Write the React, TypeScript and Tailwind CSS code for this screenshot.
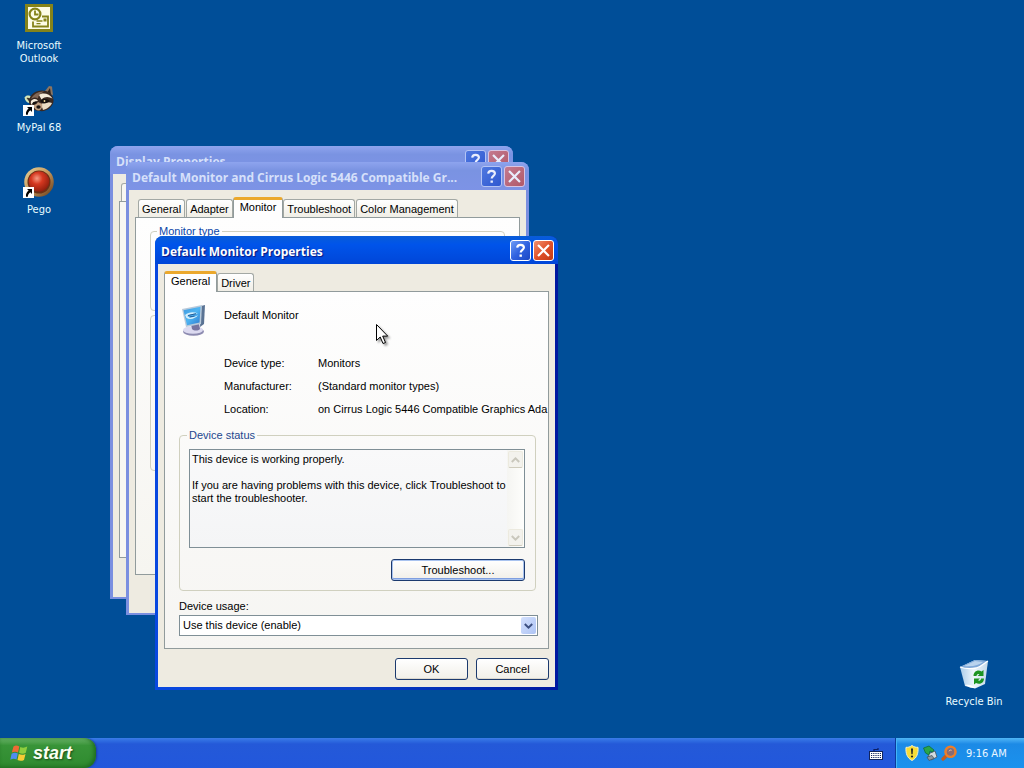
import type { ReactNode } from "react";

const MONITOR_TABS = ["General", "Adapter", "Monitor", "Troubleshoot", "Color Management"];
const DEVICE_TABS = ["General", "Driver"];
const DETAILS: [string, string][] = [
  ["Device type:", "Monitors"],
  ["Manufacturer:", "(Standard monitor types)"],
  ["Location:", "on Cirrus Logic 5446 Compatible Graphics Ada"],
];

function TitleButton({ kind, active }: { kind: "help" | "close"; active: boolean }) {
  const tone =
    kind === "help"
      ? active
        ? "border-white bg-linear-to-br from-[#6f9cf5] via-[#2f62e0] to-[#1c47c4]"
        : "border-[#b4c4f5] bg-linear-to-br from-[#4f78e0] to-[#2f57d0]"
      : active
        ? "border-white bg-linear-to-br from-[#f0906c] via-[#e0512a] to-[#c53a14]"
        : "border-[#d8c4e2] bg-linear-to-br from-[#c47a90] to-[#b05868]";
  return (
    <button
      aria-label={kind === "help" ? "Help" : "Close"}
      className={`flex h-[21px] w-[21px] items-center justify-center rounded-[3px] border ${tone}`}
    >
      <svg viewBox="0 0 19 19" className="h-[19px] w-[19px]" fill="none" stroke={active ? "#fff" : "#e9edfc"}>
        {kind === "help" ? (
          <>
            <path d="M6.2 6.6C6.3 4.8 7.6 3.8 9.5 3.8c2 0 3.4 1.1 3.4 2.8 0 2.3-3.2 2.4-3.2 5" strokeWidth="2.2" />
            <path d="M9.7 13.4v2.4" strokeWidth="2.4" />
          </>
        ) : (
          <path d="M4.8 4.8l9.4 9.4M14.2 4.8l-9.4 9.4" strokeWidth="2.2" strokeLinecap="square" />
        )}
      </svg>
    </button>
  );
}

function Window({
  title,
  active = false,
  place,
  children,
}: {
  title: string;
  active?: boolean;
  place: string;
  children: ReactNode;
}) {
  return (
    <section
      aria-label={title}
      className={`absolute flex min-h-[453px] w-[403px] flex-col overflow-hidden rounded-t-lg ${place} ${
        active ? "bg-linear-to-r from-[#0848e0] via-[#0a3ec8] to-[#0018a0]" : "bg-[#7b8fe0]"
      }`}
    >
      <header
        className={`flex h-7 items-center gap-0.5 pt-px pr-1 pl-1.5 ${
          active
            ? "bg-linear-to-b from-[#0a5cd8] via-[#0054ea] via-30% to-[#0046d8]"
            : "bg-linear-to-b from-[#8ea4ee] via-[#7a93e2] via-30% to-[#7d93e6]"
        }`}
      >
        <h2
          className={`min-w-0 flex-1 truncate pt-0.5 pr-2 font-['Open_Sans','Noto_Sans',sans-serif] text-[12px] leading-4 font-bold ${
            active ? "text-white [text-shadow:1px_1px_1px_#0a1883]" : "text-[#d6e0fa]"
          }`}
        >
          {title}
        </h2>
        <TitleButton kind="help" active={active} />
        <TitleButton kind="close" active={active} />
      </header>
      <div
        className={`mx-[3px] flex flex-1 flex-col px-1.5 pt-[7px] pb-[7px] ${
          active ? "mb-[3px]" : "mb-0.5"
        } bg-[#eeebe1]`}
      >
        {children}
      </div>
    </section>
  );
}

function Tabs({ names, selected }: { names: string[]; selected: string }) {
  const current = names.indexOf(selected);
  return (
    <div role="tablist" className="flex h-5 items-end">
      {names.map((name, index) =>
        index === current ? (
          <button
            key={name}
            role="tab"
            aria-selected="true"
            className="relative -mb-px h-[21px] rounded-t-[3px] border-x border-t-[3px] border-x-[#919b9c] border-t-[#eba82c] bg-[#fefefe] px-1.5 pb-1 leading-[13px]"
          >
            {name}
          </button>
        ) : (
          <button
            key={name}
            role="tab"
            aria-selected="false"
            className={`h-[18px] rounded-t-[3px] border border-b-0 border-[#a3a8a4] bg-linear-to-b from-white to-[#f0eee6] px-[3px] pt-px leading-[13px] ${
              index === current + 1 ? "" : index === 0 ? "ml-[3px]" : "ml-px"
            }`}
          >
            {name}
          </button>
        ),
      )}
    </div>
  );
}

function Chevron({ up = false, color }: { up?: boolean; color: string }) {
  return (
    <svg viewBox="0 0 9 6" className="h-1.5 w-[9px]" fill="none" stroke={color} strokeWidth="2">
      <path d={up ? "M0.8 5L4.5 1.4 8.2 5" : "M0.8 1L4.5 4.6 8.2 1"} />
    </svg>
  );
}

function PushButton({ children, focused = false, width }: { children: ReactNode; focused?: boolean; width: string }) {
  return (
    <button
      className={`h-[22px] ${width} rounded-[3px] border border-[#1c3a6e] bg-linear-to-b from-white to-[#f1efe8] leading-[13px] ${
        focused ? "shadow-[inset_0_0_0_1px_#a9c3ef,inset_0_-2px_0_0_#7f9fe0]" : "shadow-[inset_0_-1px_0_0_#dcd8ce]"
      }`}
    >
      {children}
    </button>
  );
}

function ShortcutArrow() {
  return (
    <g>
      <rect x="0" y="21" width="11" height="11" fill="#fff" />
      <path d="M4 23h5v5l-1.7-1.7C5.600 27.600 5 28.700 4.800 30.800H3c-.3-2.700.6-4.700 2.600-6.200z" fill="#000" />
    </g>
  );
}

function OutlookIcon() {
  return (
    <svg viewBox="0 0 32 32" className="size-8">
      <rect x="2" y="2" width="28" height="28" fill="#85831a" />
      <rect x="5" y="5" width="22" height="22" fill="#fdfce6" />
      <g fill="none" stroke="#85831a">
        <circle cx="12" cy="12" r="5.4" strokeWidth="2.2" />
        <path d="M12 8.500v4h3.500" strokeWidth="1.800" />
        <path d="M19 14.500h6v10H10v-5" strokeWidth="1.800" />
        <path d="M13.500 19h6M13.500 21.700h4" strokeWidth="1.300" />
      </g>
      <rect x="20.500" y="16.500" width="3" height="3" fill="#85831a" />
    </svg>
  );
}

function RaccoonIcon() {
  return (
    <svg viewBox="0 0 32 32" className="size-8">
      <path d="M22 7l4-5 3 .5 1 9z" fill="#8c7460" />
      <path d="M24.500 8l2.500-4 1 7z" fill="#2d211b" />
      <path d="M1.500 13.500C3 10.500 7 11 9 13l-2 6c-3 0-5-2-5.500-5.500z" fill="#d5e5b8" />
      <path d="M3.500 14c2-.8 3.500 0 4.500 2l-1.500 2z" fill="#41372c" />
      <path d="M6 17c1-8 9-12 17-10 5 1.500 8 6 7.500 10.500C30 23 23 28 17 27 10 27 6 23 6 17z" fill="#3a2922" />
      <path d="M8 15c2-5 8-8 13-7.500-4 2-6 4-6 7-3-2-5-1-7 .5z" fill="#806656" />
      <path d="M16 11c4-3 11-1 13.500 3.500-3-1.500-7-3-11 1z" fill="#f5ead9" />
      <path d="M8 17c3-3 6-2 7 0-3 0-5 2-6 4-1-1-1.500-2-1-4z" fill="#f5ead9" />
      <path d="M18 20c4-2 8-2 11-1-1 3-5 6-9 7z" fill="#eadcc5" />
      <path d="M10 21c2 0 4-1 5-3l4 2c1 3-1 6-3 6.500-3 0-5-2-6-5.500z" fill="#c2a183" />
      <path d="M17 17c3-3 8-2 10 0-2 2-6 3-8 2zM9 20c1-3 4-3 5-2-1 2-3 3-5 2z" fill="#15100e" />
      <ellipse cx="15.500" cy="23" rx="2.200" ry="1.700" fill="#1b1412" />
      <circle cx="21.500" cy="17" r=".9" fill="#f3dca0" />
      <ShortcutArrow />
    </svg>
  );
}

function PegoIcon() {
  return (
    <svg viewBox="0 0 32 32" className="size-8">
      <defs>
        <radialGradient id="pego-ball" cx=".4" cy=".35" r=".7">
          <stop offset="0" stopColor="#f59a82" />
          <stop offset=".4" stopColor="#d63820" />
          <stop offset="1" stopColor="#8a1c0c" />
        </radialGradient>
        <linearGradient id="pego-rim" x1="0" y1="0" x2="1" y2="1">
          <stop offset="0" stopColor="#e8d49a" />
          <stop offset=".5" stopColor="#c4965a" />
          <stop offset="1" stopColor="#5d3415" />
        </linearGradient>
      </defs>
      <circle cx="16" cy="16" r="14.800" fill="url(#pego-rim)" />
      <circle cx="16" cy="16" r="11.500" fill="#6b2f16" />
      <circle cx="16" cy="15.500" r="10.300" fill="url(#pego-ball)" />
      <ShortcutArrow />
    </svg>
  );
}

function RecycleIcon() {
  return (
    <svg viewBox="0 0 32 32" className="size-8">
      <defs>
        <linearGradient id="bin-body" x1="0" y1="0" x2="1" y2="0">
          <stop offset="0" stopColor="#a9cbe9" />
          <stop offset=".5" stopColor="#eef6fc" />
          <stop offset="1" stopColor="#c4d9ea" />
        </linearGradient>
      </defs>
      <path d="M2 9L17 2l13 1-3 23-10 4.500L7 28z" fill="url(#bin-body)" />
      <path d="M2 9L17 2l13 1c-4 2-5 5-12 7-6 1-10 1-16-1z" fill="#7fa8d8" />
      <path d="M6 8l11-5 8 1c-4 3-10 5-19 4z" fill="#b9d3ee" />
      <path d="M2 9c6 2 10 2 16 1 7-2 8-5 12-7" fill="none" stroke="#fff" strokeWidth="1.300" />
      <path d="M7 27c4-1 7 0 10 3l-5-.5z" fill="#fff" />
      <g fill="#1c9422">
        <path d="M15.500 18c0-4.500 4.500-7 8-4.500l2-1.500v6h-6l2-1.800c-1.600-.8-2.800 0-3 1.800z" />
        <path d="M26 20.500c0 4.500-4.500 6.500-8 4.500l-2 1.500v-6h6l-2 1.800c1.600.9 2.800.2 3-1.800z" />
      </g>
    </svg>
  );
}

function MonitorIcon() {
  return (
    <svg viewBox="0 0 32 32" className="size-8 shrink-0">
      <defs>
        <linearGradient id="screen" x1="0" y1="0" x2="1" y2="1">
          <stop offset="0" stopColor="#3f9ae0" />
          <stop offset=".5" stopColor="#4fb5f2" />
          <stop offset="1" stopColor="#2d7ad0" />
        </linearGradient>
      </defs>
      <ellipse cx="14.500" cy="27.500" rx="10.500" ry="4.300" fill="#8d8bb0" />
      <ellipse cx="14" cy="26" rx="10" ry="3.800" fill="#dcdaf0" />
      <path d="M12 20l8-1 1 6c-2 2-6 2-8 0z" fill="#7674a0" />
      <path d="M22 2l4-1-1 19-4 3z" fill="#5a7394" />
      <path d="M3 5l20-4-1 19-15 3z" fill="#b8c9da" />
      <path d="M4.500 6.300l17-3.500-1 15.800-12.500 2.600z" fill="url(#screen)" />
      <path d="M6 11c4-3.500 9-3.500 13-1.500-4-.3-8 .5-11 2.500l3 1.500c3 0 6-1.300 8-2.500-2 3.500-8 5-11.500 3z" fill="#d5f0fd" />
      <path d="M9 11.500l8-1.800M10.500 13l5-1" stroke="#245d9a" strokeWidth="1" />
    </svg>
  );
}

function DesktopIcon({ icon, children }: { icon: ReactNode; children: ReactNode }) {
  return (
    <button className="flex w-[76px] flex-col items-center gap-[5px] text-center font-['DejaVu_Sans_Condensed','Noto_Sans',sans-serif] text-[11px] leading-[13px] text-[#eafcff]">
      {icon}
      <span>{children}</span>
    </button>
  );
}

function Taskbar() {
  return (
    <footer className="relative flex h-[30px] items-stretch bg-linear-to-b from-[#3a7ce8] via-[#2459d8] via-20% to-[#2257dc]">
      <button className="flex w-24 items-center gap-[5px] rounded-r-xl bg-linear-to-b from-[#68b368] via-[#389438] via-25% to-[#2f8a2f] pl-2.5 shadow-[inset_-2px_-1px_4px_#1d6a1d,1px_0_2px_#1a3f9c]">
        <svg viewBox="0 0 18 18" className="size-[18px]">
          <path d="M3.500 2.500C5.500 1 7.500 1.500 9.300 2.500L8 8.500C6 7.400 4 7.400 1.800 8.600z" fill="#ee6a35" />
          <path d="M10.300 3c2 1 4.500 1 7-.4L15.800 8.800c-2.300 1.300-4.600 1-6.700 0z" fill="#8fce3e" />
          <path d="M1.600 9.700c2.200-1.200 4.200-1.200 6.200-.2L6.500 15.500c-2-1-4-1-6.200.3z" fill="#4f8df0" />
          <path d="M8.800 10c2.200 1 4.400 1 6.700-.1L14 16c-2.300 1.200-4.500 1-6.500 0z" fill="#f7cc35" />
        </svg>
        <span className="font-['Liberation_Sans',sans-serif] text-[18px] leading-6 font-bold text-[#fbfff2] italic [text-shadow:1px_1px_2px_#174a17]">
          start
        </span>
      </button>
      <button aria-label="Language bar" className="mr-3 ml-auto">
        <svg viewBox="0 0 14 14" className="mt-0.5 size-3.5">
          <path d="M5 4V2.500h4V1" fill="none" stroke="#0b1f66" strokeWidth="1.200" />
          <rect x=".5" y="4.500" width="13" height="8" fill="#fff" stroke="#10245e" />
          <path d="M2 6.500h10M2 8.500h10M2 10.500h10" stroke="#10245e" strokeWidth="1.100" strokeDasharray="1.200 1" />
        </svg>
      </button>
      <div className="flex w-[129px] items-center border-l border-[#0c3b9c] bg-linear-to-b from-[#4fb6f6] via-[#1c8ae6] via-20% to-[#1a92ee] pl-2 shadow-[inset_1px_0_0_#43b6f8]">
        <svg viewBox="0 0 16 16" className="size-4">
          <path d="M8 .5C10 2 12 2.500 14 2.300 14.500 8 13 13 8 15.500 3 13 1.500 8 2 2.300 4 2.500 6 2 8 .5z" fill="#f8dc35" stroke="#f4f0c4" strokeWidth="1" />
          <path d="M7 3.500h2l-.4 5.700H7.400z" fill="#222" />
          <circle cx="8" cy="11.500" r="1.100" fill="#222" />
        </svg>
        <svg viewBox="0 0 16 16" className="ml-0.5 size-4">
          <path d="M6 9l7-3 2 6-6 3z" fill="#d5dbe0" stroke="#49535e" strokeWidth=".8" />
          <path d="M5 12l5-1.500 2 3-5 2z" fill="#8e989f" stroke="#444d57" strokeWidth=".7" />
          <path d="M1.500 3L7 1l5 4-1.500 2L8 6l-1 4-3.500-2z" fill="#2aa54a" stroke="#0d6a2c" strokeWidth=".7" />
        </svg>
        <svg viewBox="0 0 18 16" className="ml-0.5 h-4 w-[18px]" fill="none">
          <path d="M7.500 9.500L3 14" stroke="#c65c1c" strokeWidth="3.200" strokeLinecap="round" />
          <circle cx="10.500" cy="6.800" r="5" stroke="#ee7d28" strokeWidth="2.600" />
          <circle cx="10.500" cy="6.800" r="3.600" fill="#8c6a70" />
          <path d="M9 6.300c.4-1.200 1.600-1.500 2.600-1" stroke="#efc8a8" strokeWidth="1" />
        </svg>
        <time className="ml-2 font-['DejaVu_Sans_Condensed','Noto_Sans',sans-serif] text-[11px] leading-[13px] whitespace-nowrap text-[#eaf7ff]">
          9:16 AM
        </time>
      </div>
    </footer>
  );
}

export default function App() {
  return (
    <div className="flex min-h-screen flex-col bg-[#004e98] font-['Liberation_Sans',Arial,sans-serif] text-[11px] leading-[13px] text-black">
      <main className="relative flex flex-1 justify-between overflow-hidden">
        <nav aria-label="Desktop" className="flex flex-col pt-0.5 pl-px">
          <div className="h-[82px]">
            <DesktopIcon icon={<OutlookIcon />}>Microsoft Outlook</DesktopIcon>
          </div>
          <div className="h-[82px]">
            <DesktopIcon icon={<RaccoonIcon />}>MyPal 68</DesktopIcon>
          </div>
          <div className="h-[82px]">
            <DesktopIcon icon={<PegoIcon />}>Pego</DesktopIcon>
          </div>
        </nav>
        <div className="self-end pr-3 pb-[30px]">
          <DesktopIcon icon={<RecycleIcon />}>Recycle Bin</DesktopIcon>
        </div>

        <Window title="Display Properties" place="top-[146px] left-[110px]">
          <div className="flex h-5 items-end">
            <span className="ml-0.5 h-[18px] w-12 rounded-t-[3px] border border-b-0 border-[#a3a8a4] bg-[#f8f7f2]" />
          </div>
          <div className="mb-8 flex-1 border border-[#919b9c] bg-[#f8f7f3]" />
        </Window>

        <Window
          title="Default Monitor and Cirrus Logic 5446 Compatible Gr..."
          place="top-[162px] left-[126px]"
        >
          <Tabs names={MONITOR_TABS} selected="Monitor" />
          <div className="mb-[31px] flex flex-1 flex-col gap-1 border border-[#919b9c] bg-linear-to-b from-[#fefefe] to-[#f6f5f0] px-3.5 pt-[7px]">
            <fieldset className="h-[86px] rounded-[4px] border border-[#d0d0bf] px-1.5">
              <legend className="px-0.5 text-[#0a46a8]">Monitor type</legend>
            </fieldset>
            <fieldset className="h-[156px] rounded-[4px] border border-[#d0d0bf] px-1.5" />
          </div>
        </Window>

        <Window title="Default Monitor Properties" active place="top-[236px] left-[155px]">
          <Tabs names={DEVICE_TABS} selected="General" />
          <div
            role="tabpanel"
            className="flex flex-1 flex-col border border-[#919b9c] bg-linear-to-b from-[#fefefe] to-[#f6f5f2] pt-3 pr-2.5 pb-3 pl-3.5"
          >
            <div className="flex gap-[13px]">
              <MonitorIcon />
              <p className="pt-[5px]">Default Monitor</p>
            </div>
            <dl className="mt-[21px] -mr-2.5 grid grid-cols-[94px_minmax(0,1fr)] gap-y-2.5 pl-[45px]">
              {DETAILS.map(([label, value]) => (
                <div key={label} className="contents">
                  <dt>{label}</dt>
                  <dd className="whitespace-nowrap">{value}</dd>
                </div>
              ))}
            </dl>
            <fieldset className="mt-[13px] mr-0.5 flex min-w-0 flex-col rounded-[4px] border border-[#d0d0bf] pr-2.5 pb-[9px] pl-[9px]">
              <legend className="-ml-0.5 px-0.5 text-[#23478f]">Device status</legend>
              <div className="mt-[7px] flex h-[99px] border border-[#7f8f96] bg-linear-to-b from-[#f9f9fa] to-[#f4f5f6]">
                <textarea
                  readOnly
                  aria-label="Device status"
                  className="min-w-0 flex-1 resize-none overflow-hidden bg-transparent py-[3px] pl-0.5 leading-[13px] outline-none"
                  defaultValue={
                    "This device is working properly.\n\nIf you are having problems with this device, click Troubleshoot to start the troubleshooter."
                  }
                />
                <div className="-ml-1 flex w-[17px] flex-col justify-between bg-linear-to-r from-[#f5f5f2] to-[#fefefc]">
                  <button
                    disabled
                    aria-label="Scroll up"
                    className="m-px flex h-[17px] items-center justify-center rounded-[2px] border border-[#eceadf] border-b-[#cfccbd] bg-[#f3f2ed]"
                  >
                    <Chevron up color="#c9c7bc" />
                  </button>
                  <button
                    disabled
                    aria-label="Scroll down"
                    className="m-px flex h-[17px] items-center justify-center rounded-[2px] border border-[#eceadf] border-b-[#cfccbd] bg-[#f3f2ed]"
                  >
                    <Chevron color="#c9c7bc" />
                  </button>
                </div>
              </div>
              <div className="mt-[11px] flex justify-end">
                <PushButton focused width="w-[134px]">
                  Troubleshoot...
                </PushButton>
              </div>
            </fieldset>
            <label htmlFor="usage" className="mt-[9px]">
              Device usage:
            </label>
            <div className="relative mt-0.5">
              <select
                id="usage"
                className="block h-[21px] w-full appearance-none border border-[#7f8f96] bg-white pr-5 pl-[3px] leading-[13px]"
              >
                <option>Use this device (enable)</option>
                <option>Do not use this device (disable)</option>
              </select>
              <span className="pointer-events-none absolute inset-y-0.5 right-0.5 flex w-[15px] items-center justify-center rounded-[2px] bg-linear-to-br from-[#d3e0fd] to-[#aec4f4]">
                <Chevron color="#3c4f80" />
              </span>
            </div>
          </div>
          <div className="mt-[9px] flex justify-end gap-2">
            <PushButton width="w-[73px]">OK</PushButton>
            <PushButton width="w-[73px]">Cancel</PushButton>
          </div>
        </Window>

        <svg
          viewBox="0 0 16 24"
          aria-hidden="true"
          className="absolute top-[323px] left-[376px] h-6 w-4 drop-shadow-[2px_2px_1px_rgba(0,0,0,0.4)]"
        >
          <path d="M.5 1.500v16l3.700-3.500 2.800 6.500 2.500-1-2.800-6.400h5z" fill="#fff" stroke="#000" strokeWidth="1" />
        </svg>
      </main>
      <Taskbar />
    </div>
  );
}
